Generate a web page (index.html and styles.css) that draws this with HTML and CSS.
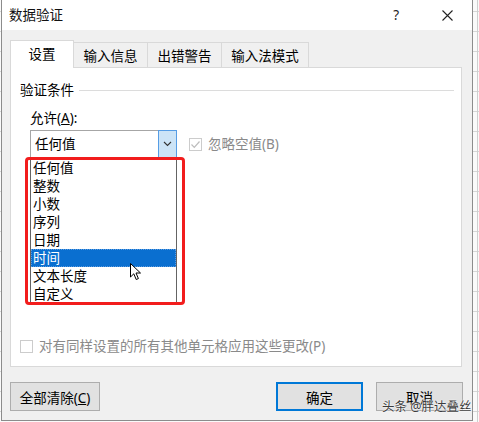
FILE: index.html
```html
<!DOCTYPE html>
<html lang="zh-CN">
<head>
<meta charset="utf-8">
<title>数据验证</title>
<link rel="stylesheet" href="styles.css">
</head>
<body>
<div class="dialog">
  <div class="titlebar">
    <span class="title">数据验证</span>
    <span class="help">?</span>
    <svg class="close" width="11" height="11" viewBox="0 0 11 11"><path d="M0.5 0.5 L10.5 10.5 M10.5 0.5 L0.5 10.5" stroke="#222" stroke-width="1.1" fill="none"/></svg>
  </div>
  <div class="content">
    <div class="tabs">
      <div class="tab active">设置</div>
      <div class="tab w4">输入信息</div>
      <div class="tab w4">出错警告</div>
      <div class="tab w5">输入法模式</div>
    </div>
    <div class="panel">
      <div class="group-head"><span>验证条件</span><span class="rule"></span></div>
      <div class="field-label">允许(<u>A</u>):</div>
      <div class="combo-row">
        <div class="combo">
          <span class="combo-value">任何值</span>
          <span class="combo-btn"><svg width="9" height="6" viewBox="0 0 9 6"><path d="M1 1 L4.5 4.5 L8 1" stroke="#333" stroke-width="1.1" fill="none"/></svg></span>
          <ul class="dropdown">
            <li>任何值</li>
            <li>整数</li>
            <li>小数</li>
            <li>序列</li>
            <li>日期</li>
            <li class="selected">时间</li>
            <li>文本长度</li>
            <li>自定义</li>
          </ul>
          <div class="mark-box"></div>
          <svg class="cursor" width="12" height="18" viewBox="0 0 12 18"><path d="M0.5 0.5 L0.5 14 L3.8 10.8 L6.2 16.5 L8.4 15.6 L6 10 L10.5 10 Z" fill="#fff" stroke="#000" stroke-width="1" stroke-linejoin="round"/></svg>
        </div>
        <div class="check disabled">
          <span class="box"><svg width="11" height="11" viewBox="0 0 11 11"><path d="M1.5 5.5 L4.3 8.3 L9.5 2.5" stroke="#bdbdbd" stroke-width="1.2" fill="none"/></svg></span>
          <span>忽略空值(B)</span>
        </div>
      </div>
      <div class="check disabled bottom-check">
        <span class="box"></span>
        <span>对有同样设置的所有其他单元格应用这些更改(P)</span>
      </div>
    </div>
    <div class="buttons">
      <button class="btn wide">全部清除(<u>C</u>)</button>
      <button class="btn primary">确定</button>
      <button class="btn">取消</button>
    </div>
  </div>
  <div class="watermark">头条 @胖达叠丝</div>
</div>
</body>
</html>
```
FILE: styles.css
```css
* { box-sizing: border-box; }
html, body { margin: 0; padding: 0; }
body {
  width: 479px;
  height: 422px;
  overflow: hidden;
  background-color: #fafafa;
  background-image:
    linear-gradient(to right, transparent 477px, #cfcfcf 477px, #cfcfcf 478px, transparent 478px),
    repeating-linear-gradient(to bottom, transparent 0, transparent 11px, #d6d6d6 11px, #d6d6d6 12px, transparent 12px, transparent 20px);
  font-family: "Noto Sans", "Noto Sans CJK SC", sans-serif;
  font-size: 13.5px;
  color: #000;
}
.dialog {
  position: relative;
  margin-left: 1px;
  width: 472px;
  height: 421px;
  border-left: 1px solid #8c8c8c;
  border-right: 1px solid #8c8c8c;
  border-bottom: 1px solid #8c8c8c;
  background: #f0f0f0;
  display: flex;
  flex-direction: column;
}
.titlebar {
  height: 30px;
  flex: none;
  background: #fff;
  display: flex;
  align-items: center;
  padding: 0 19px 0 7px;
  line-height: 18px;
}
.title { font-size: 13.5px; color: #111; }
.help { margin-left: auto; font-size: 13.5px; color: #222; }
.close { margin-left: 43px; display: block; }
.content {
  flex: 1;
  display: flex;
  flex-direction: column;
  padding: 10px 8px 9px 8px;
}
.tabs {
  display: flex;
  align-items: flex-end;
  height: 28px;
  margin-bottom: -1px;
  position: relative;
  z-index: 1;
}
.tab {
  height: 25px;
  margin-bottom: 1px;
  width: 74px;
  border: 1px solid #d9d9d9;
  border-bottom: none;
  border-left: none;
  background: #f0f0f0;
  display: flex;
  align-items: center;
  justify-content: center;
  line-height: 18px;
  padding-top: 1px;
}
.tab.active {
  width: 64px;
  height: 28px;
  margin-bottom: 0;
  background: #fff;
  border-left: 1px solid #d9d9d9;
  padding-top: 0;
  padding-bottom: 1px;
}
.tab.w5 { width: 87px; }
.panel {
  height: 300px;
  margin-right: 2px;
  background: #fff;
  border: 1px solid #d9d9d9;
  padding: 13px 7px 13px 9px;
  display: flex;
  flex-direction: column;
}
.group-head {
  display: flex;
  align-items: center;
  height: 18px;
  line-height: 18px;
}
.rule {
  flex: 1;
  height: 1px;
  background: #dcdcdc;
  margin-left: 5px;
}
.field-label {
  margin: 10px 0 0 10px;
  line-height: 18px;
}
.combo-row {
  margin: 3px 0 0 10px;
  display: flex;
  align-items: center;
}
.combo {
  position: relative;
  width: 147px;
  height: 28px;
  border: 1px solid #a6a6a6;
  background: #fff;
  display: flex;
  align-items: stretch;
}
.combo-value {
  flex: 1;
  padding-left: 4px;
  line-height: 26px;
}
.combo-btn {
  width: 19px;
  margin: -1px -1px -1px 0;
  background: #cce4f7;
  border: 1px solid #569de5;
  display: flex;
  align-items: center;
  justify-content: center;
}
.dropdown {
  position: absolute;
  left: -1px;
  top: 27px;
  width: 147px;
  margin: 0;
  padding: 0;
  list-style: none;
  background: #fff;
  border: 1px solid #646464;
  z-index: 2;
}
.dropdown li {
  height: 18px;
  line-height: 18px;
  padding-left: 2px;
}
.dropdown li.selected {
  background: #0a6fd0;
  color: #fff;
  outline: 1px dotted #5a9be0;
  outline-offset: -1px;
}
.mark-box {
  position: absolute;
  left: -6px;
  top: 26px;
  width: 160px;
  height: 148px;
  border: 3px solid #f21d1d;
  border-radius: 4px;
  z-index: 3;
}
.cursor {
  position: absolute;
  left: 99px;
  top: 132px;
  z-index: 4;
}
.check {
  display: flex;
  align-items: center;
  line-height: 18px;
}
.check.disabled { color: #8a8a8a; }
.box {
  width: 13px;
  height: 13px;
  border: 1px solid #cccccc;
  background: #fff;
  display: flex;
  align-items: center;
  justify-content: center;
  margin-right: 6px;
}
.combo-row .check { margin-left: 12px; }
.bottom-check { margin-top: auto; height: 14px; }
.buttons {
  margin-top: 15px;
  display: flex;
  gap: 13px;
  padding-right: 1px;
}
.btn {
  height: 29px;
  width: 87px;
  background: #e1e1e1;
  border: 1px solid #adadad;
  font-family: inherit;
  font-size: 13.5px;
  color: #000;
  padding: 0;
}
.btn.wide { width: 90px; margin-right: auto; }
.btn.primary { border: 2px solid #0078d7; }
.watermark {
  position: absolute;
  left: 380px;
  top: 399px;
  font-size: 12.5px;
  line-height: 16px;
  color: #3c3c3c;
  text-shadow: 0 0 1px #fff, 0 0 2px #fff;
  white-space: nowrap;
}
```
